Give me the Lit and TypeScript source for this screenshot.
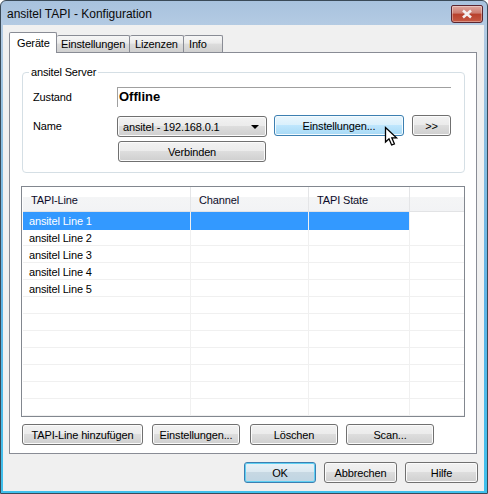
import { LitElement, html, css } from "lit";
import { customElement } from "lit/decorators.js";

@customElement("app-root")
export class AppRoot extends LitElement {
  static styles = css`
    :host { display: block; width: 488px; height: 494px; font-family: "Liberation Sans", Arial, sans-serif; font-size: 11px; letter-spacing: -0.15px; color: #000; }
    * { box-sizing: border-box; }
    .window { position: relative; width: 488px; height: 494px; display: flex; flex-direction: column; padding: 0 3px 2px 2px;
      border: 1px solid #3a4a58; border-radius: 6px 6px 0 0;
      background: linear-gradient(180deg, #a8c2de 0, #b4cbe3 25px, #8fbfe0 120px, #5fb4e6 300px, #3fc0ec 100%); }
    .titlebar { height: 24px; flex: none; display: flex; align-items: flex-start; padding-left: 4px; }
    .title { font-size: 12px; line-height: 14px; margin: 6px 0 0 0; letter-spacing: 0; color: #0a0a0a; }
    .close { margin: 4px 1px 0 auto; width: 32px; height: 18px; border: 1px solid #5a2530; border-radius: 2px 2px 3px 3px;
      background: linear-gradient(180deg, #dfa79f 0, #cc7c70 45%, #b8402c 50%, #c65a45 100%);
      box-shadow: inset 0 0 0 1px rgba(255,255,255,.35); display: flex; align-items: center; justify-content: center; }
    .client { flex: 1; min-height: 0; background: #f0f0f0; padding: 7px 0 0 6px; display: flex; flex-direction: column; }
    .tabs { display: flex; align-items: flex-end; height: 20px; flex: none; }
    .tab { height: 17px; border: 1px solid #898c95; border-bottom: none; border-left: none; border-radius: 2px 2px 0 0; padding: 1px 0 0 5px;
      background: linear-gradient(180deg, #f6f6f6 0, #ebebeb 45%, #dcdcdc 50%, #d0d0d0 100%); line-height: 14px; }
    .tab.active { height: 21px; width: 48px; background: #fff; border-left: 1px solid #898c95; padding: 3px 0 0 7px; margin-bottom: -1px; position: relative; z-index: 1; }
    .t1 { width: 73px; padding-left: 4px; } .t2 { width: 54px; } .t3 { width: 39px; }
    .panel { width: 468px; height: 402px; flex: none; background: #fff; border: 1px solid #898c95; padding: 12px 0 0 12px; }
    fieldset { margin: 0; padding: 0 13px 0 10px; height: 108px; border: 1px solid #d5dfe5; border-radius: 4px; width: 443px; }
    legend { padding: 0 2px; margin-left: -4px; line-height: 14px; }
    .r1 { display: flex; height: 20px; margin-top: 8px; }
    .lbl { width: 84px; flex: none; line-height: 20px; }
    .value { flex: 1; border-top: 1px solid #a0a0a0; border-left: 1px solid #a0a0a0; font-weight: 700; font-size: 13px; letter-spacing: 0; line-height: 17px; padding-left: 1px; }
    .r2 { display: flex; height: 22px; margin-top: 8px; align-items: flex-start; }
    .r2 .lbl { line-height: 22px; }
    .combo { width: 150px; height: 21px; margin-top: 1px; border: 1px solid #707070; border-radius: 3px; display: flex; align-items: center; padding: 0 5px; justify-content: space-between;
      background: linear-gradient(180deg, #f2f2f2 0, #ebebeb 49%, #dddddd 50%, #cfcfcf 100%); box-shadow: inset 0 0 0 1px #fbfbfb; }
    .caret { width: 0; height: 0; border: 4px solid transparent; border-top: 4px solid #000; border-bottom: none; margin-right: 2px; }
    button { font: inherit; letter-spacing: inherit; color: #000; height: 21px; padding: 1px 0 0; border: 1px solid #707070; border-radius: 3px; line-height: 17px;
      background: linear-gradient(180deg, #f2f2f2 0, #ebebeb 49%, #dddddd 50%, #cfcfcf 100%); box-shadow: inset 0 0 0 1px #fbfbfb; flex: none; }
    button.hover { border-color: #3c7fb1; background: linear-gradient(180deg, #eaf6fd 0, #d9f0fc 49%, #bee6fd 50%, #a7d9f5 100%); box-shadow: inset 0 0 0 1px #f4fbfe; }
    button.default { border-color: #3c7fb1; background: linear-gradient(180deg, #e8f2f8 0, #dbe8f0 49%, #c7d8e3 50%, #bfd5e3 100%); box-shadow: inset 0 0 0 1px #5fd0f3; }
    .set { width: 130px; margin-left: 7px; }
    .more { width: 39px; margin-left: 8px; }
    .connect { display: block; width: 148px; margin: 4px 0 0 85px; }
    .list { width: 444px; height: 231px; margin: 13px 0 0 -1px; border: 1px solid #82878f; padding: 0 0 0 1px; overflow: hidden; background: #fff; }
    .row { display: grid; grid-template-columns: 168px 118px 101px 1fr; height: 17px; border-bottom: 1px solid #f0f0f0; }
    .row > div { border-right: 1px solid #f0f0f0; line-height: 18px; padding-left: 6px; }
    .row > div:last-child { border-right: none; }
    .row.sel > div { background: #3399ff; color: #fff; }
    .row.sel > div:last-child { background: #fff; }
    .head { display: grid; grid-template-columns: 168px 118px 101px 1fr; height: 25px; border-bottom: 1px solid #e2e3e5;
      background: linear-gradient(180deg, #fff 0, #fff 40%, #f4f5f6 41%, #f2f3f5 100%); }
    .head > div { border-right: 1px solid #e4e5e7; line-height: 26px; padding-left: 8px; color: #0c0c2a; }
    .head > div:last-child { border-right: none; }
    .actions { display: flex; margin-top: 7px; }
    .b1 { width: 121px; } .b2 { width: 88px; margin-left: 9px; } .b3 { width: 88px; margin-left: 10px; } .b4 { width: 88px; margin-left: 8px; }
    .footer { display: flex; padding: 8px 0 0 235px; }
    .ok { width: 72px; } .cancel { width: 73px; margin-left: 8px; } .help { width: 73px; margin-left: 8px; }
    .cursor { position: absolute; left: 383px; top: 125px; width: 15px; height: 23px; }
  `;

  render() {
    const lines = ["ansitel Line 1", "ansitel Line 2", "ansitel Line 3", "ansitel Line 4", "ansitel Line 5", "", "", "", "", "", "", ""];
    return html`
      <div class="window">
        <div class="titlebar">
          <div class="title">ansitel TAPI - Konfiguration</div>
          <div class="close">
            <svg width="14" height="10" viewBox="0 0 14 10"><path d="M3 1.5l8 7M11 1.5l-8 7" fill="none" stroke="#f4f0f0" stroke-width="2.6"/></svg>
          </div>
        </div>
        <div class="client">
          <div class="tabs">
            <div class="tab active">Geräte</div>
            <div class="tab t1">Einstellungen</div>
            <div class="tab t2">Lizenzen</div>
            <div class="tab t3">Info</div>
          </div>
          <div class="panel">
            <fieldset>
              <legend>ansitel Server</legend>
              <div class="r1"><div class="lbl">Zustand</div><div class="value">Offline</div></div>
              <div class="r2">
                <div class="lbl">Name</div>
                <div class="combo"><span>ansitel - 192.168.0.1</span><span class="caret"></span></div>
                <button class="set hover">Einstellungen...</button>
                <button class="more">&gt;&gt;</button>
              </div>
              <button class="connect">Verbinden</button>
            </fieldset>
            <div class="list">
              <div class="head"><div>TAPI-Line</div><div>Channel</div><div>TAPI State</div><div></div></div>
              ${lines.map((l, i) => html`<div class="row ${i === 0 ? "sel" : ""}"><div>${l}</div><div></div><div></div><div></div></div>`)}
            </div>
            <div class="actions">
              <button class="b1">TAPI-Line hinzufügen</button>
              <button class="b2">Einstellungen...</button>
              <button class="b3">Löschen</button>
              <button class="b4">Scan...</button>
            </div>
          </div>
          <div class="footer">
            <button class="ok default">OK</button>
            <button class="cancel">Abbrechen</button>
            <button class="help">Hilfe</button>
          </div>
        </div>
        <svg class="cursor" viewBox="0 0 15 23">
          <path d="M2 2.5v14l3.5-3 2.6 6 2.6-1.1-2.6-5.9h4.7z" fill="#000" opacity=".25"/>
          <path d="M1.5 1.5v14.5l3.5-3.2 2.6 6.2 2.8-1.2-2.6-6h4.7z" fill="#fff" stroke="#000" stroke-width="1.3"/>
        </svg>
      </div>
    `;
  }
}
